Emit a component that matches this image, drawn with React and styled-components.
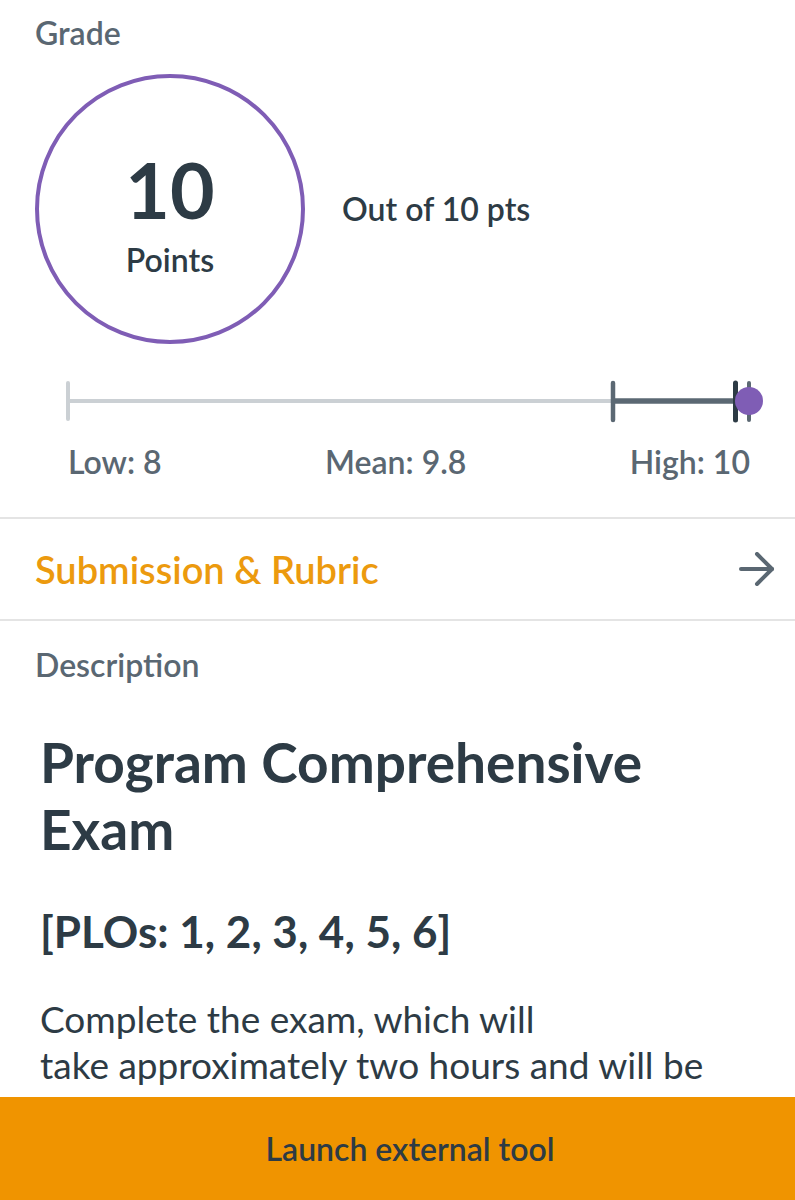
import React from 'react'
import styled, { createGlobalStyle } from 'styled-components'

const GlobalStyle = createGlobalStyle`
  * { box-sizing: border-box; }
  html, body { margin: 0; padding: 0; background: #fff; }
  body {
    font-family: Lato, "Open Sans", "Liberation Sans", sans-serif;
    color: #2d3b45;
  }
`

const COLORS = {
  text: '#2d3b45',
  muted: '#5a6772',
  purple: '#7f5db5',
  orange: '#ec9a0e',
  bar: '#f09400',
  rule: '#e4e4e4',
  track: '#cbd0d4',
  range: '#5b6873',
}

const Page = styled.div`
  display: flex;
  flex-direction: column;
  height: 100vh;
  overflow: hidden;
`
const Scroller = styled.div`
  flex: 1;
  overflow: hidden;
`
const Section = styled.section`
  padding: ${p => p.$top || 0}px 35px ${p => p.$bottom || 0}px 35px;
`
const SectionLabel = styled.h3`
  margin: 0;
  font-size: 32px;
  line-height: 38px;
  font-weight: 600;
  color: ${COLORS.muted};
`
const ScoreRow = styled.div`
  display: flex;
  align-items: center;
  gap: 37px;
  margin-top: 22px;
`
const ScoreCircle = styled.div`
  width: 270px;
  height: 270px;
  border-radius: 50%;
  border: 4.5px solid ${COLORS.purple};
  display: flex;
  flex-direction: column;
  align-items: center;
  justify-content: center;
  padding-top: 9px;
`
const ScoreValue = styled.div`
  font-size: 77px;
  line-height: 80px;
  font-weight: 700;
  color: ${COLORS.text};
`
const ScoreUnit = styled.div`
  margin-top: 12px;
  font-size: 32px;
  line-height: 38px;
  font-weight: 600;
  color: ${COLORS.text};
`
const OutOf = styled.div`
  font-size: 32px;
  line-height: 38px;
  font-weight: 600;
  color: ${COLORS.text};
`
const RangeChart = styled.svg`
  display: block;
  margin-top: 34px;
  overflow: visible;
`
const StatsRow = styled.div`
  display: flex;
  justify-content: space-between;
  margin: 19px 10px 0 33px;
`
const Stat = styled.span`
  font-size: 32px;
  line-height: 38px;
  font-weight: 600;
  color: ${COLORS.muted};
`
const Divider = styled.hr`
  margin: 0;
  border: 0;
  height: 2px;
  background: ${COLORS.rule};
`
const LinkRow = styled.a`
  display: flex;
  align-items: center;
  justify-content: space-between;
  height: 100px;
  padding: 0 20px 0 35px;
  text-decoration: none;
`
const LinkText = styled.span`
  font-size: 38px;
  font-weight: 600;
  color: ${COLORS.orange};
`
const Content = styled.div`
  padding-left: 5px;
`
const Title = styled.h1`
  margin: 45px 0 0;
  font-size: 55px;
  line-height: 67px;
  font-weight: 700;
  color: ${COLORS.text};
`
const Subtitle = styled.h2`
  margin: 42px 0 0;
  font-size: 44px;
  line-height: 53px;
  font-weight: 700;
  color: ${COLORS.text};
`
const Body = styled.p`
  margin: 38px 0 0;
  font-size: 37px;
  line-height: 46px;
  font-weight: 400;
  color: ${COLORS.text};
`
const LaunchBar = styled.button`
  flex: 0 0 103px;
  border: 0;
  background: ${COLORS.bar};
  font-family: inherit;
  font-size: 32px;
  font-weight: 600;
  color: ${COLORS.text};
  padding: 0 0 0 25px;
`

const ArrowIcon = () => (
  <svg width="38" height="34" viewBox="0 0 38 34" fill="none"
    stroke={COLORS.muted} strokeWidth="4" strokeLinecap="round" strokeLinejoin="round">
    <path d="M4 17h31" />
    <path d="M20 2l15 15-15 15" />
  </svg>
)

// positions along the track, in px from the section's left padding
const range = { start: 33, low: 578, mean: 700.5, high: 714 }

const GradeRange = () => (
  <RangeChart width="725" height="46" viewBox="0 0 725 46">
    <line x1={range.start} y1="23" x2={range.low} y2="23" stroke={COLORS.track} strokeWidth="4" />
    <line x1={range.start} y1="5" x2={range.start} y2="41" stroke={COLORS.track} strokeWidth="4" strokeLinecap="round" />
    <line x1={range.low} y1="23" x2={range.high} y2="23" stroke={COLORS.range} strokeWidth="5.5" />
    <line x1={range.low} y1="5" x2={range.low} y2="42" stroke={COLORS.range} strokeWidth="4.5" strokeLinecap="round" />
    <line x1={range.high} y1="5" x2={range.high} y2="42" stroke={COLORS.range} strokeWidth="4" strokeLinecap="round" />
    <line x1={range.mean} y1="5" x2={range.mean} y2="42" stroke={COLORS.text} strokeWidth="5" strokeLinecap="round" />
    <circle cx={range.high} cy="23" r="14" fill={COLORS.purple} />
  </RangeChart>
)

export default function App() {
  return (
    <Page>
      <GlobalStyle />
      <Scroller>
        <Section $top={14} $bottom={36}>
          <SectionLabel>Grade</SectionLabel>
          <ScoreRow>
            <ScoreCircle>
              <ScoreValue>10</ScoreValue>
              <ScoreUnit>Points</ScoreUnit>
            </ScoreCircle>
            <OutOf>Out of 10 pts</OutOf>
          </ScoreRow>
          <GradeRange />
          <StatsRow>
            <Stat>Low: 8</Stat>
            <Stat>Mean: 9.8</Stat>
            <Stat>High: 10</Stat>
          </StatsRow>
        </Section>
        <Divider />
        <LinkRow href="#">
          <LinkText>Submission &amp; Rubric</LinkText>
          <ArrowIcon />
        </LinkRow>
        <Divider />
        <Section $top={25}>
          <SectionLabel>Description</SectionLabel>
          <Content>
            <Title>Program Comprehensive Exam</Title>
            <Subtitle>[PLOs: 1, 2, 3, 4, 5, 6]</Subtitle>
            <Body>
              Complete the exam, which will<br />
              take approximately two hours and will be
            </Body>
          </Content>
        </Section>
      </Scroller>
      <LaunchBar>Launch external tool</LaunchBar>
    </Page>
  )
}
